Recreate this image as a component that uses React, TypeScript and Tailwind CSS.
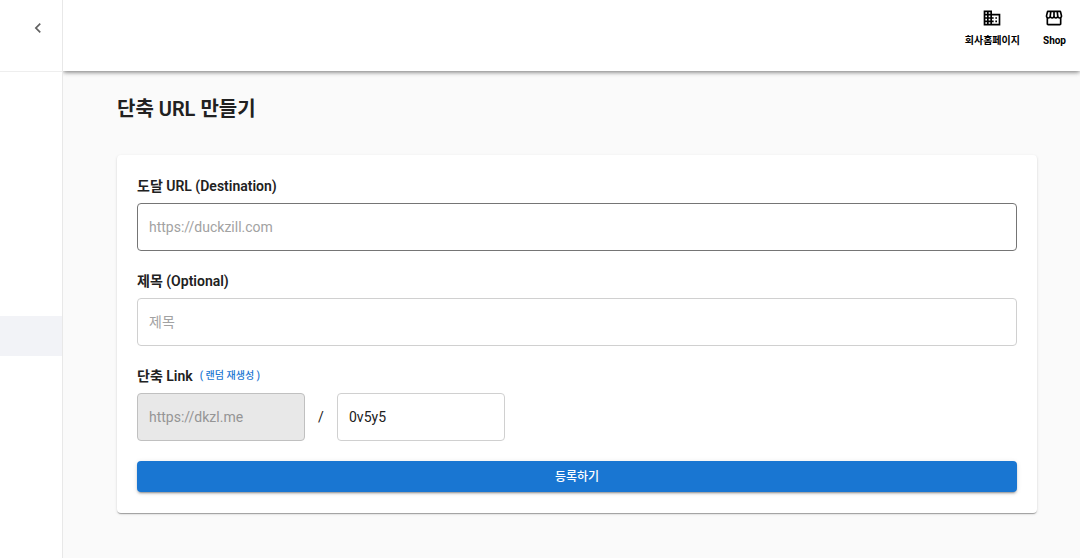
import React, { useState } from 'react';
import { MdBusiness, MdChevronLeft, MdOutlineStorefront } from 'react-icons/md';

const fieldClass =
  'block h-12 w-full rounded border bg-white px-[11px] text-[14px] text-[#212121] placeholder:text-[#a2a2a2]';
const labelClass = 'block text-[14px] leading-5 font-semibold text-[#212121]';

const randomSlug = () => Math.random().toString(36).slice(2, 7);

const Sidebar: React.FC = () => (
  <aside className="w-[63px] shrink-0 border-r border-[#e8e8e8] bg-white">
    <div className="flex h-[72px] items-start justify-end border-b border-[#eeeeee] pt-[18px] pr-[14px]">
      <button type="button" aria-label="메뉴 접기" className="text-[#616161]">
        <MdChevronLeft className="size-5" />
      </button>
    </div>
    <nav className="pt-[244px]">
      <a href="#short-url" aria-label="단축 URL" className="block h-10 bg-[#f2f3f7]" />
    </nav>
  </aside>
);

const Header: React.FC = () => (
  <header className="relative flex h-[71px] items-start justify-end gap-[23px] bg-white pt-2 pr-[14px] text-[10px] leading-4 font-bold text-black shadow-[0_2px_4px_-1px_rgba(0,0,0,0.3),0_1px_5px_rgba(0,0,0,0.3)] [clip-path:inset(0_0_-12px_0)]">
    <a href="#company" className="flex flex-col items-center gap-[5px]">
      <MdBusiness className="size-5" />
      회사홈페이지
    </a>
    <a href="#shop" className="flex flex-col items-center gap-[5px]">
      <MdOutlineStorefront className="size-5" />
      Shop
    </a>
  </header>
);

const ShortUrlForm: React.FC = () => {
  const [slug, setSlug] = useState('0v5y5');

  return (
    <form
      onSubmit={(e) => e.preventDefault()}
      className="mt-8 rounded bg-white px-5 py-[21px] shadow-[0_2px_1px_-1px_rgba(0,0,0,0.2),0_1px_1px_rgba(0,0,0,0.14),0_1px_3px_rgba(0,0,0,0.12)]"
    >
      <label htmlFor="destination" className={labelClass}>
        도달 URL (Destination)
      </label>
      <input
        id="destination"
        type="url"
        placeholder="https://duckzill.com"
        className={`${fieldClass} mt-[7px] border-[#757575]`}
      />

      <label htmlFor="title" className={`${labelClass} mt-5`}>
        제목 (Optional)
      </label>
      <input
        id="title"
        type="text"
        placeholder="제목"
        className={`${fieldClass} mt-[7px] border-[#d0d0d0]`}
      />

      <div className="mt-5 flex items-center gap-[7px]">
        <label htmlFor="slug" className={labelClass}>
          단축 Link
        </label>
        <button
          type="button"
          onClick={() => setSlug(randomSlug())}
          className="text-[10px] leading-5 font-medium text-[#1976d2]"
        >
          ( 랜덤 재생성 )
        </button>
      </div>
      <div className="mt-[7px] flex items-center">
        <div className="w-[168px]">
          <input
            type="text"
            aria-label="도메인"
            value="https://dkzl.me"
            disabled
            className="block h-12 w-full rounded border border-[#c0c0c0] bg-[#e8e8e8] px-[11px] text-[14px] text-[#959595]"
          />
        </div>
        <span className="w-8 text-center text-[14px] text-[#212121]">/</span>
        <div className="w-[168px]">
          <input
            id="slug"
            type="text"
            value={slug}
            onChange={(e) => setSlug(e.target.value)}
            className={`${fieldClass} border-[#d0d0d0]`}
          />
        </div>
      </div>

      <button
        type="submit"
        className="mt-5 block h-[31px] w-full rounded bg-[#1976d2] text-[12px] font-medium text-white shadow-[0_3px_1px_-2px_rgba(0,0,0,0.2),0_2px_2px_rgba(0,0,0,0.14),0_1px_5px_rgba(0,0,0,0.12)]"
      >
        등록하기
      </button>
    </form>
  );
};

export default function App() {
  return (
    <div className="flex min-h-screen bg-[#fafafa] font-[Roboto,'Noto_Sans_CJK_KR',sans-serif]">
      <Sidebar />
      <div className="min-w-0 flex-1">
        <Header />
        <main className="pt-6 pr-[43px] pb-11 pl-[54px]">
          <h1 className="text-[20px] leading-7 font-semibold text-[#212121]">단축 URL 만들기</h1>
          <ShortUrlForm />
        </main>
      </div>
    </div>
  );
}
